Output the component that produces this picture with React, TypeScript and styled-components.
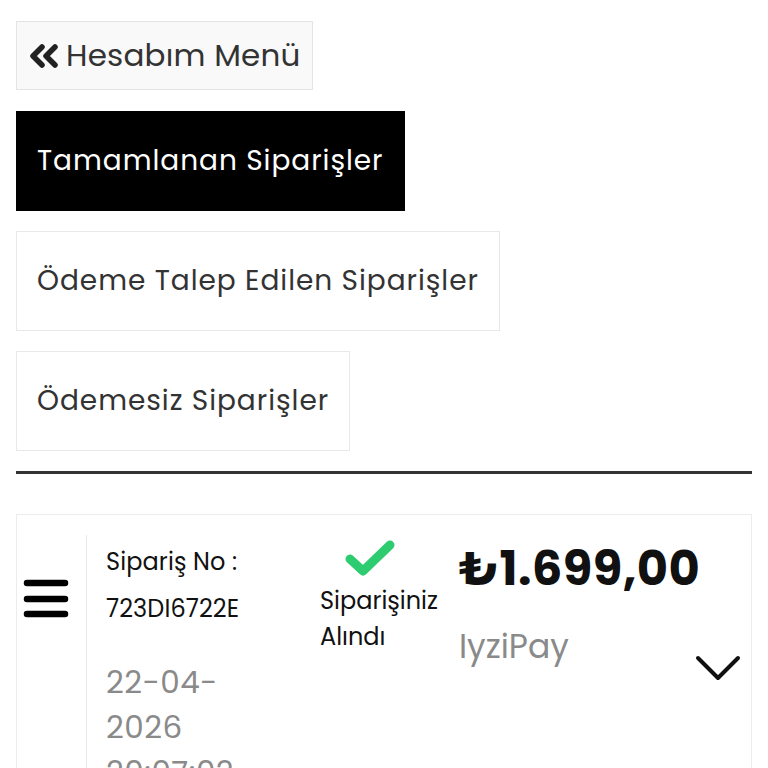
import React from "react";
import styled, { createGlobalStyle } from "styled-components";

const GlobalStyle = createGlobalStyle`
	html, body {
		margin: 0;
		padding: 0;
		background: #fff;
		overflow: hidden;
	}
	body {
		font-family: 'Poppins', 'Noto Sans', sans-serif;
		color: #333;
	}
`;

const Page = styled.div`
	display: flex;
	flex-direction: column;
	align-items: flex-start;
	padding: 21px 16px 0 16px;
	width: 768px;
	box-sizing: border-box;
`;

const BackButton = styled.a`
	display: flex;
	align-items: center;
	gap: 7px;
	height: 69px;
	box-sizing: border-box;
	padding: 0 11px 0 12px;
	background: #f9f9f9;
	border: 1px solid #e4e4e4;
	font-size: 31px;
	letter-spacing: 0.2px;
	color: #333;
	text-decoration: none;
`;

const TabList = styled.div`
	display: flex;
	flex-direction: column;
	align-items: flex-start;
	gap: 20px;
	margin-top: 21px;
`;

const Tab = styled.a<{ $active?: boolean }>`
	display: flex;
	align-items: center;
	height: 100px;
	box-sizing: border-box;
	padding: 0 20px;
	font-size: 28px;
	letter-spacing: 0.95px;
	text-decoration: none;
	background: ${(p) => (p.$active ? "#000" : "#fff")};
	color: ${(p) => (p.$active ? "#fff" : "#333")};
	border: 1px solid ${(p) => (p.$active ? "#000" : "#e8e8e8")};
`;

const Divider = styled.hr`
	align-self: stretch;
	margin: 20px 0 0 0;
	border: none;
	border-top: 3px solid #333;
`;

const Card = styled.div`
	align-self: stretch;
	margin-top: 40px;
	display: flex;
	border: 1px solid #ececec;
	border-bottom: none;
	min-height: 300px;
`;

const MenuCol = styled.div`
	width: 70px;
	display: flex;
	align-items: flex-start;
	padding: 44px 0 0 6px;
	margin-top: 20px;
	border-right: 1px solid #e8e8e8;
	box-sizing: border-box;
`;

const InfoCol = styled.div`
	width: 233px;
	padding: 23px 0 0 19px;
	box-sizing: border-box;
	color: #111;
`;

const InfoLine = styled.div`
	font-size: 24px;
	line-height: 47px;
	letter-spacing: 0.1px;
`;

const DateText = styled.div`
	margin-top: 28px;
	font-size: 31px;
	line-height: 45px;
	color: #8a8a8a;
	letter-spacing: 0.5px;
`;

const StatusCol = styled.div`
	width: 139px;
	display: flex;
	flex-direction: column;
	align-items: flex-start;
	padding-top: 24px;
	box-sizing: border-box;

	> svg {
		margin-left: 24px;
	}
`;

const StatusText = styled.div`
	margin-top: 6px;
	font-size: 24px;
	line-height: 36px;
	color: #111;
`;

const PriceCol = styled.div`
	flex: 1;
	display: flex;
	flex-direction: column;
	padding: 26px 10px 0 0;
	box-sizing: border-box;
`;

const Price = styled.div`
	font-size: 48px;
	font-weight: 700;
	color: #111;
	line-height: 56px;
	letter-spacing: 0.4px;
`;

const Method = styled.div`
	margin-top: 30px;
	font-size: 33px;
	color: #8a8a8a;
	line-height: 40px;
`;

const Chevron = styled.div`
	align-self: flex-end;
	margin-top: -13px;
	display: flex;
`;

const Bars = () => (
	<svg width="46" height="40" viewBox="0 0 46 40">
		<g stroke="#000" strokeWidth="6.5" strokeLinecap="round">
			<line x1="4" y1="4" x2="42" y2="4" />
			<line x1="4" y1="20" x2="42" y2="20" />
			<line x1="4" y1="35" x2="42" y2="35" />
		</g>
	</svg>
);

const Check = () => (
	<svg width="52" height="38" viewBox="0 0 52 38">
		<polyline
			points="6,20 19,32 46,6"
			fill="none"
			stroke="#2ecc71"
			strokeWidth="9"
			strokeLinecap="round"
			strokeLinejoin="round"
		/>
	</svg>
);

const DoubleLeft = () => (
	<svg width="30" height="24" viewBox="0 0 30 24">
		<g fill="none" stroke="#222" strokeWidth="5.5" strokeLinecap="round" strokeLinejoin="round">
			<polyline points="13,3 4,12 13,21" />
			<polyline points="26,3 17,12 26,21" />
		</g>
	</svg>
);

const ChevronDown = () => (
	<svg width="46" height="28" viewBox="0 0 46 28">
		<polyline
			points="3,4 23,24 43,4"
			fill="none"
			stroke="#111"
			strokeWidth="4"
			strokeLinecap="round"
			strokeLinejoin="round"
		/>
	</svg>
);

export default function App() {
	return (
		<>
			<GlobalStyle />
			<Page>
				<BackButton href="#">
					<DoubleLeft />
					Hesabım Menü
				</BackButton>
				<TabList>
					<Tab $active href="#">Tamamlanan Siparişler</Tab>
					<Tab href="#">Ödeme Talep Edilen Siparişler</Tab>
					<Tab href="#">Ödemesiz Siparişler</Tab>
				</TabList>
				<Divider />
				<Card>
					<MenuCol>
						<Bars />
					</MenuCol>
					<InfoCol>
						<InfoLine>Sipariş No :</InfoLine>
						<InfoLine>723DI6722E</InfoLine>
						<DateText>22-04-<br />2026<br />20:07:02</DateText>
					</InfoCol>
					<StatusCol>
						<Check />
						<StatusText>Siparişiniz<br />Alındı</StatusText>
					</StatusCol>
					<PriceCol>
						<Price>₺1.699,00</Price>
						<Method>IyziPay</Method>
						<Chevron>
							<ChevronDown />
						</Chevron>
					</PriceCol>
				</Card>
			</Page>
		</>
	);
}
